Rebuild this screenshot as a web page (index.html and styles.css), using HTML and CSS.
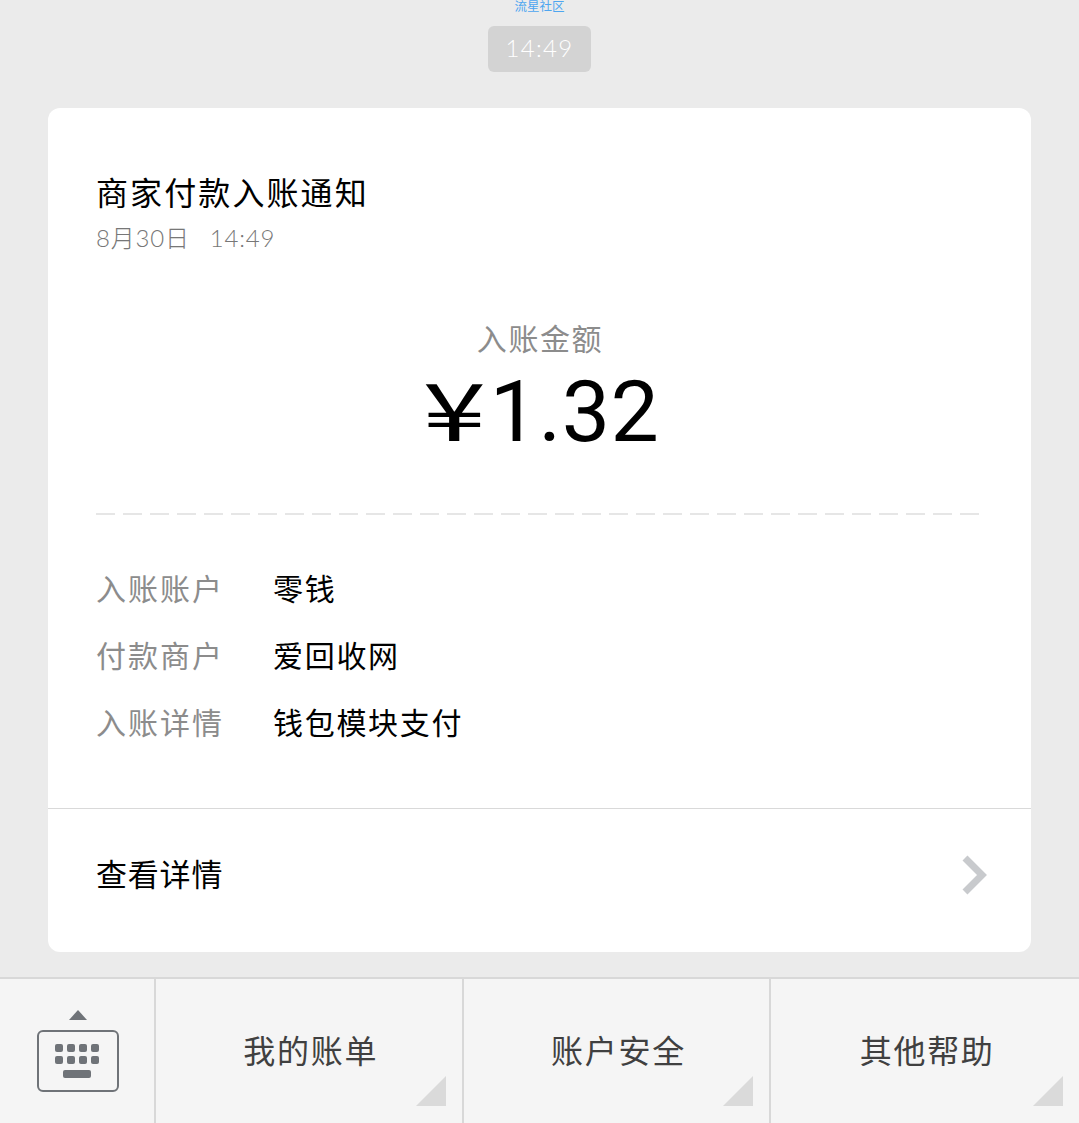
FILE: index.html
```html
<!DOCTYPE html>
<html lang="zh-CN">
<head>
    <meta charset="UTF-8">
    <meta name="viewport" content="width=device-width, initial-scale=1.0">
    <title>商家付款入账通知</title>
    <link rel="stylesheet" href="styles.css">
</head>
<body>
    <div class="chat">
        <div class="source">流星社区</div>
        <div class="time-pill">14:49</div>

        <div class="card">
            <div class="card-body">
                <h2 class="title">商家付款入账通知</h2>
                <div class="date">8月30日<span class="date-time">14:49</span></div>

                <div class="amount-label">入账金额</div>
                <div class="amount"><span class="yen"><span class="yen-glyph">¥</span></span>1.32</div>

                <div class="dashes"></div>

                <div class="rows">
                    <div class="row">
                        <span class="row-label">入账账户</span>
                        <span class="row-value">零钱</span>
                    </div>
                    <div class="row">
                        <span class="row-label">付款商户</span>
                        <span class="row-value">爱回收网</span>
                    </div>
                    <div class="row">
                        <span class="row-label">入账详情</span>
                        <span class="row-value">钱包模块支付</span>
                    </div>
                </div>
            </div>

            <div class="card-link">
                <span>查看详情</span>
                <svg class="chevron" width="26" height="40" viewBox="0 0 26 40">
                    <path d="M3 3 L20 20 L3 37" fill="none" stroke="#c8cacd" stroke-width="7"/>
                </svg>
            </div>
        </div>
    </div>

    <div class="menu">
        <div class="menu-keyboard">
            <svg width="84" height="86" viewBox="0 0 84 86">
                <path d="M33 12 L42 2 L51 12 Z" fill="#6f7378"/>
                <rect x="2" y="23" width="80" height="60" rx="5" fill="none" stroke="#6f7378" stroke-width="2"/>
                <g fill="#6f7378">
                    <rect x="19" y="36" width="8" height="8" rx="2"/>
                    <rect x="31" y="36" width="8" height="8" rx="2"/>
                    <rect x="43" y="36" width="8" height="8" rx="2"/>
                    <rect x="55" y="36" width="8" height="8" rx="2"/>
                    <rect x="19" y="48" width="8" height="8" rx="2"/>
                    <rect x="31" y="48" width="8" height="8" rx="2"/>
                    <rect x="43" y="48" width="8" height="8" rx="2"/>
                    <rect x="55" y="48" width="8" height="8" rx="2"/>
                    <rect x="27" y="62" width="28" height="8" rx="2"/>
                </g>
            </svg>
        </div>
        <div class="menu-item">我的账单<span class="corner"></span></div>
        <div class="menu-item">账户安全<span class="corner"></span></div>
        <div class="menu-item">其他帮助<span class="corner"></span></div>
    </div>
</body>
</html>
```

FILE: styles.css
```css
* {
    box-sizing: border-box;
}
html, body {
    margin: 0;
    height: 100%;
}
body {
    width: 1079px;
    height: 1123px;
    overflow: hidden;
    background: #ebebeb;
    color: #000;
    font-family: "Noto Sans CJK SC", "Noto Sans", sans-serif;
    display: flex;
    flex-direction: column;
}
.chat {
    height: 977px;
    display: flex;
    flex-direction: column;
    align-items: center;
}
.source {
    height: 26px;
    line-height: 12px;
    font-size: 12.5px;
    color: #4da6f0;
}
.time-pill {
    width: 103px;
    height: 46px;
    line-height: 44px;
    text-align: center;
    background: #d3d3d3;
    border-radius: 6px;
    color: #fff;
    font-family: "Lato", sans-serif;
    font-size: 24px;
    font-weight: 300;
    letter-spacing: 1.3px;
}
.card {
    width: 983px;
    height: 844px;
    margin-top: 36px;
    background: #fff;
    border-radius: 12px;
    display: flex;
    flex-direction: column;
}
.card-body {
    height: 701px;
    padding: 62px 52px 0 48px;
    border-bottom: 1px solid #d9d9d9;
}
.title {
    margin: 0;
    font-size: 32px;
    font-weight: 400;
    line-height: 42px;
    letter-spacing: 2.1px;
}
.date {
    margin-top: 9px;
    font-family: "Lato", "Noto Sans CJK SC", sans-serif;
    font-size: 24px;
    font-weight: 300;
    line-height: 34px;
    color: #777;
    letter-spacing: 0.8px;
}
.date-time {
    margin-left: 20px;
}
.amount-label {
    margin-top: 62px;
    margin-right: -5px;
    text-align: center;
    font-size: 30px;
    line-height: 40px;
    letter-spacing: 1.6px;
    color: #8c8c8c;
}
.amount {
    height: 100px;
    margin-top: -1px;
    margin-right: -5px;
    display: flex;
    justify-content: center;
    align-items: baseline;
    font-family: "Roboto", sans-serif;
    font-size: 86px;
    line-height: 100px;
    letter-spacing: 0.5px;
}
.yen {
    width: 57px;
    margin-right: 12px;
    display: flex;
    justify-content: center;
    font-family: "Noto Sans CJK SC", sans-serif;
    font-size: 80px;
    letter-spacing: 0;
}
.yen-glyph {
    transform: translateX(5px) scaleX(1.42);
}
.dashes {
    margin-top: 57px;
    height: 2px;
    background: repeating-linear-gradient(to right, #e6e6e6 0 19px, transparent 19px 27px);
}
.rows {
    margin-top: 51px;
    display: flex;
    flex-direction: column;
    gap: 24px;
}
.row {
    display: flex;
    height: 43px;
    line-height: 43px;
    font-size: 30px;
    letter-spacing: 1.7px;
}
.row-label {
    width: 177px;
    color: #8c8c8c;
    letter-spacing: 2px;
}
.card-link {
    flex: 1;
    display: flex;
    align-items: center;
    justify-content: space-between;
    padding: 0 43px 16px 48px;
    font-size: 31px;
    letter-spacing: 0.8px;
}
.chevron {
    margin-top: 4px;
}
.menu {
    flex: 1;
    display: flex;
    background: #f5f5f5;
    border-top: 2px solid #d8d8d8;
}
.menu-keyboard {
    width: 156px;
    display: flex;
    justify-content: center;
    padding-top: 29px;
    padding-left: 2px;
    border-right: 2px solid #d8d8d8;
}
.menu-item {
    position: relative;
    width: 308px;
    display: flex;
    align-items: center;
    justify-content: center;
    padding-left: 4px;
    padding-bottom: 4px;
    border-right: 2px solid #d8d8d8;
    font-size: 32px;
    letter-spacing: 1.7px;
    color: #404040;
}
.menu-item:last-child {
    border-right: none;
}
.corner {
    position: absolute;
    right: 16px;
    bottom: 17px;
    width: 0;
    height: 0;
    border-left: 30px solid transparent;
    border-bottom: 30px solid #dadada;
}
```
